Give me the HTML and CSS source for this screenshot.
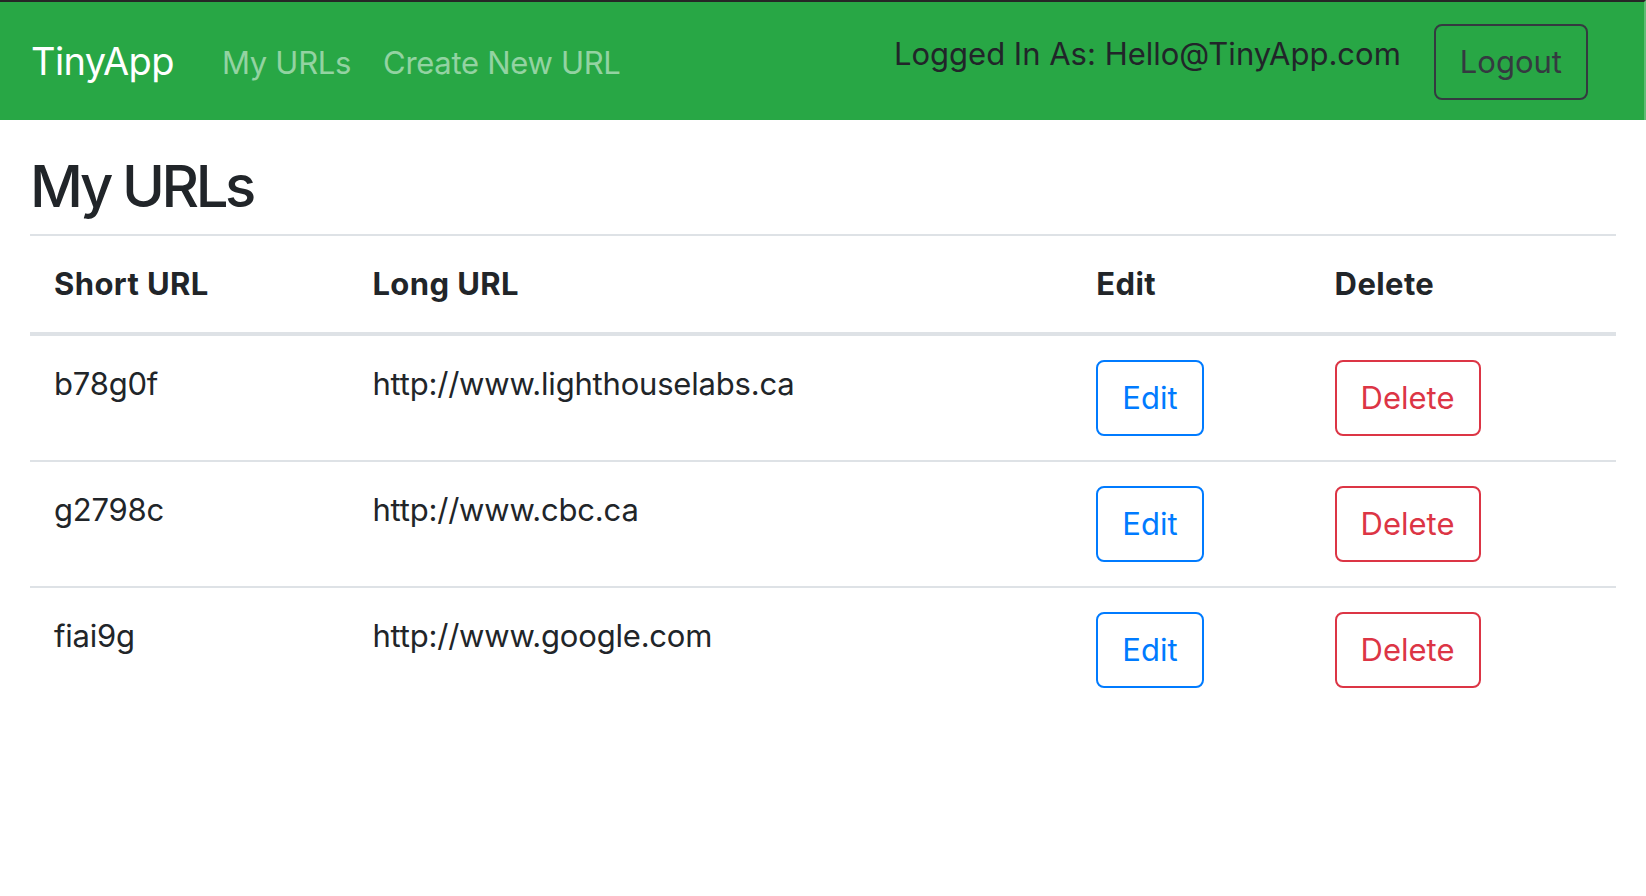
FILE: index.html
```html
<!DOCTYPE html>
<html lang="en">
<head>
<meta charset="utf-8">
<title>TinyApp</title>
<link rel="stylesheet" href="styles.css">
</head>
<body>
<nav class="navbar">
  <a class="brand" href="#">TinyApp</a>
  <a class="nav-link" href="#">My URLs</a>
  <a class="nav-link" href="#">Create New URL</a>
  <span class="logged-in">Logged In As: Hello@TinyApp.com</span>
  <button class="btn btn-dark-outline">Logout</button>
</nav>
<main class="container">
  <h2 class="page-title">My URLs</h2>
  <table class="url-table">
    <colgroup>
      <col class="c-short"><col class="c-long"><col class="c-edit"><col class="c-del">
    </colgroup>
    <thead>
      <tr><th>Short URL</th><th>Long URL</th><th>Edit</th><th>Delete</th></tr>
    </thead>
    <tbody>
      <tr>
        <td>b78g0f</td><td>http://www.lighthouselabs.ca</td>
        <td><button class="btn btn-primary-outline">Edit</button></td>
        <td><button class="btn btn-danger-outline">Delete</button></td>
      </tr>
      <tr>
        <td>g2798c</td><td>http://www.cbc.ca</td>
        <td><button class="btn btn-primary-outline">Edit</button></td>
        <td><button class="btn btn-danger-outline">Delete</button></td>
      </tr>
      <tr>
        <td>fiai9g</td><td>http://www.google.com</td>
        <td><button class="btn btn-primary-outline">Edit</button></td>
        <td><button class="btn btn-danger-outline">Delete</button></td>
      </tr>
    </tbody>
  </table>
</main>
</body>
</html>
```
FILE: styles.css
```css
* { box-sizing: border-box; }
html, body { margin: 0; padding: 0; background: #fff; }
body {
  font-family: Inter, "Liberation Sans", sans-serif;
  color: #212529;
  font-size: 31px;
  line-height: 48px;
}
.navbar {
  display: flex;
  align-items: center;
  height: 120px;
  background: #28a745;
  border-top: 2px solid #262626;
  border-right: 2px solid #5ebd74;
  padding: 0 56px 0 31px;
}
.brand {
  color: #fff;
  text-decoration: none;
  font-size: 38px;
  line-height: 57px;
  letter-spacing: -0.6px;
  margin-right: 32px;
}
.nav-link {
  color: rgba(255,255,255,0.5);
  text-decoration: none;
  padding: 0 16px;
  margin-top: 4px;
  letter-spacing: -0.3px;
}
.logged-in {
  margin-left: auto;
  margin-right: 33px;
  margin-bottom: 14px;
  color: #212529;
}
.btn {
  font-family: inherit;
  font-size: 31px;
  line-height: 48px;
  padding: 12px 24px;
  border: 2px solid;
  border-radius: 8px;
  background: transparent;
  cursor: pointer;
}
.btn-dark-outline {
  color: #343a40;
  border-color: #343a40;
  margin-top: 2px;
}
.btn-primary-outline { color: #007bff; border-color: #007bff; }
.btn-danger-outline { color: #dc3545; border-color: #dc3545; }
.container {
  padding: 0 30px;
}
.page-title {
  margin: 31px 0 13px 0;
  font-size: 58px;
  line-height: 70px;
  font-weight: 500;
  letter-spacing: -3.4px;
}
.url-table {
  width: 100%;
  border-collapse: collapse;
  table-layout: fixed;
}
.c-short { width: 318px; }
.c-long { width: 723px; }
.c-edit { width: 238px; }
.c-del { width: 305px; }
.url-table th, .url-table td {
  padding: 24px;
  text-align: left;
  vertical-align: top;
  border-top: 2px solid #dee2e6;
}
.url-table th {
  font-weight: 700;
  letter-spacing: 0.4px;
  border-bottom: 4px solid #dee2e6;
}
.url-table td {
  font-weight: 400;
  letter-spacing: -0.2px;
}
```
